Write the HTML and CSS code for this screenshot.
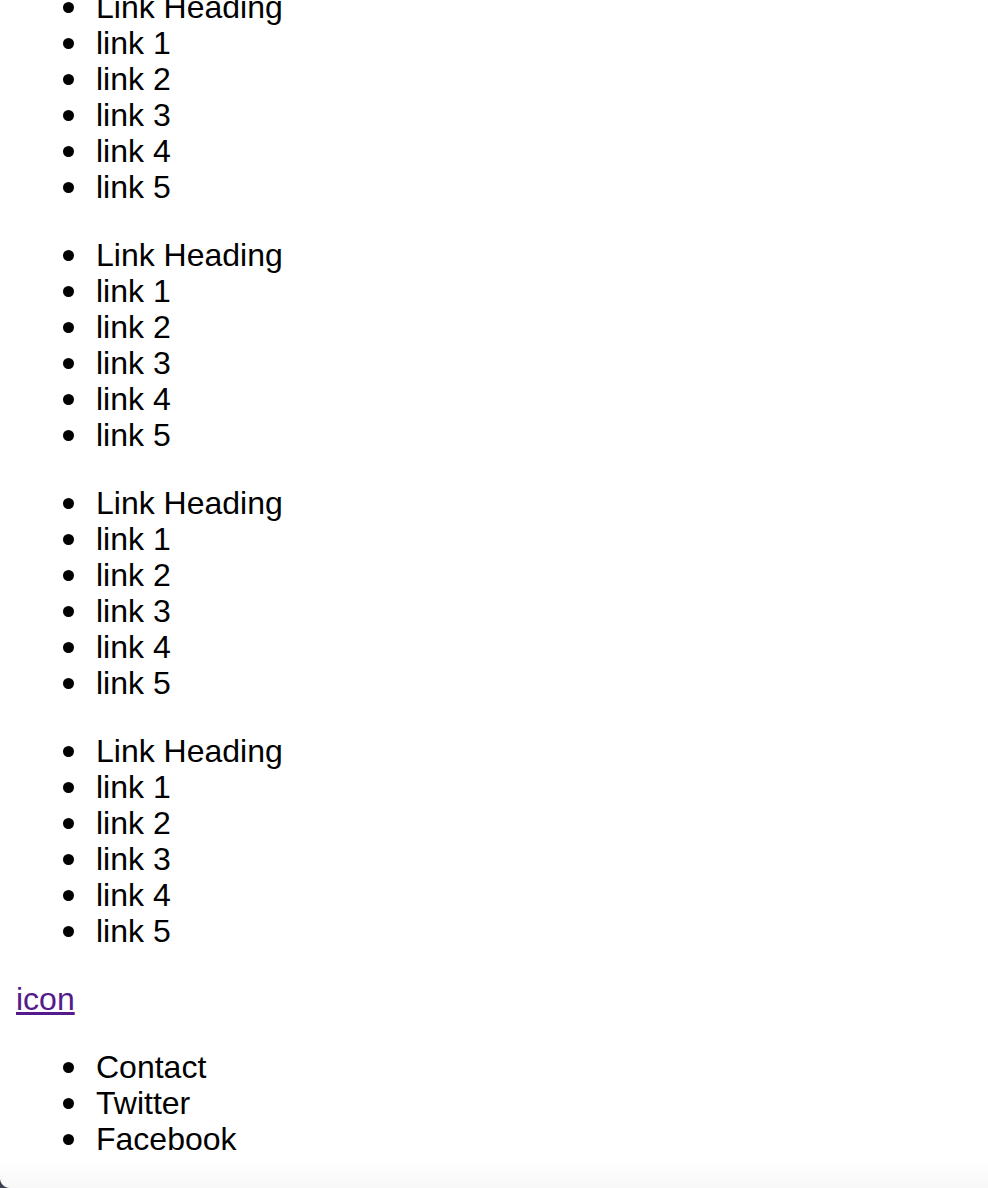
FILE: index.html
```html
<!DOCTYPE html>
<html>
<head>
<meta charset="utf-8">
<link rel="stylesheet" href="styles.css">
</head>
<body>
<div class="page">
  <ul class="links first"><li>Link Heading</li><li>link 1</li><li>link 2</li><li>link 3</li><li>link 4</li><li>link 5</li></ul>
  <ul class="links"><li>Link Heading</li><li>link 1</li><li>link 2</li><li>link 3</li><li>link 4</li><li>link 5</li></ul>
  <ul class="links"><li>Link Heading</li><li>link 1</li><li>link 2</li><li>link 3</li><li>link 4</li><li>link 5</li></ul>
  <ul class="links"><li>Link Heading</li><li>link 1</li><li>link 2</li><li>link 3</li><li>link 4</li><li>link 5</li></ul>
  <div class="icon-row"><a class="icon-link" href="#">icon</a></div>
  <ul class="links"><li>Contact</li><li>Twitter</li><li>Facebook</li></ul>
</div>
<div class="bottom-fade"></div>
<div class="corner"></div>
</body>
</html>
```
FILE: styles.css
```css
html, body {
  margin: 0;
  padding: 0;
  background: #fff;
  overflow: hidden;
}
body {
  font-family: "Liberation Sans", Arial, sans-serif;
  font-size: 32px;
  line-height: 36px;
  color: #000;
}
.page {
  padding: 0 16px;
}
.links {
  margin: 32px 0;
  padding-left: 80px;
  list-style: none;
}
.links li {
  position: relative;
}
.links li::before {
  content: "";
  position: absolute;
  left: -33px;
  top: 13px;
  width: 11px;
  height: 11px;
  border-radius: 50%;
  background: #000;
}
.links.first {
  margin-top: -11px;
}
.icon-link {
  color: #551a8b;
  text-decoration: underline;
}
.bottom-fade {
  position: fixed;
  left: 0;
  right: 0;
  bottom: 0;
  height: 30px;
  background: linear-gradient(to bottom, rgba(250,250,250,0), #f8f8f8);
  pointer-events: none;
}
.corner {
  position: fixed;
  left: 0;
  bottom: 0;
  width: 10px;
  height: 10px;
  background: radial-gradient(circle at 100% 0, rgba(0,0,0,0) 9.5px, #3c4250 10.5px);
  pointer-events: none;
}
```
